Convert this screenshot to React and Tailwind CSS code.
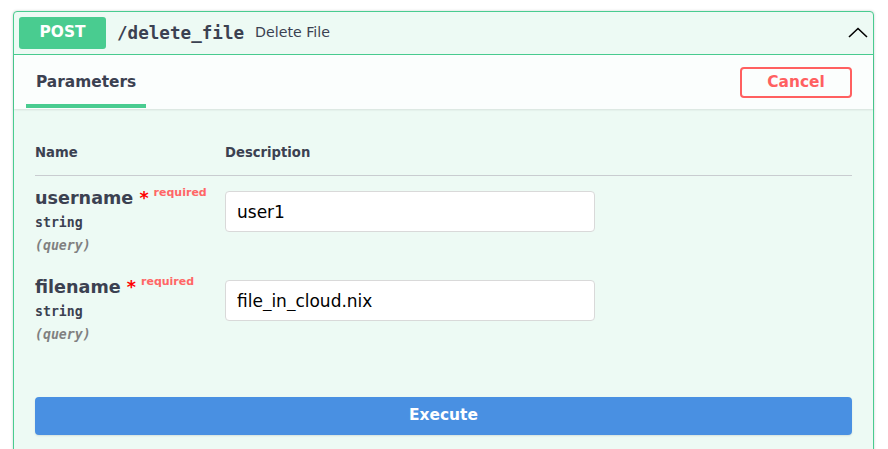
import React from "react";

const sans = { fontFamily: '"DejaVu Sans", sans-serif' };

function ParamRow({ name, value }) {
  return (
    <div className="flex h-[89px]">
      <div className="w-[190px] shrink-0 pt-[7px]">
        <div className="whitespace-nowrap text-[17.6px] font-bold leading-[19px] text-[#3b4151]">
          {name}
          <span className="text-[red]">&nbsp;*</span>
          <span className="px-[5px] align-[8px] text-[11px] font-bold text-[#ff6666]">
            required
          </span>
        </div>
        <div className="mt-[8px] font-['DejaVu_Sans_Mono',monospace] text-[13.2px] font-semibold leading-[14px] text-[#3b4151]">
          string
        </div>
        <div className="mt-[9px] font-['DejaVu_Sans_Mono',monospace] text-[13.2px] font-semibold italic leading-[14px] text-[#808080]">
          (query)
        </div>
      </div>
      <div className="pt-[15px]">
        <input
          defaultValue={value}
          className="h-[41px] w-[370px] rounded-[4px] border border-[#d9d9d9] bg-white px-[11px] text-[17px] text-black outline-none"
          style={sans}
        />
      </div>
    </div>
  );
}

export default function App() {
  return (
    <div className="min-h-screen bg-white pl-[13px] pt-[11px]" style={sans}>
      <div className="w-[861px] rounded-t-[4px] border border-[#49cc90] bg-[#edfaf4] shadow-[0_0_3px_rgba(0,0,0,0.19)]">
        {/* summary */}
        <div className="flex items-center border-b border-[#49cc90] p-[5px]">
          <div className="flex h-[32px] w-[87px] items-center justify-center rounded-[3px] bg-[#49cc90] text-[15.4px] font-bold text-white">
            POST
          </div>
          <span className="px-[11px] font-['DejaVu_Sans_Mono',monospace] text-[17.6px] font-bold text-[#3b4151]">
            /delete_file
          </span>
          <span className="text-[14.2px] text-[#3b4151]">Delete File</span>
          <svg className="ml-auto" width="20" height="20" viewBox="0 0 20 20">
            <polyline
              points="1,14 10,5.5 19,14"
              fill="none"
              stroke="#000"
              strokeWidth="1.6"
            />
          </svg>
        </div>

        {/* section header */}
        <div className="flex h-[54px] items-start bg-white/80 pl-[12px] pr-[21px] shadow-[0_1px_2px_rgba(0,0,0,0.1)]">
          <div className="mt-[18px] border-b-4 border-[#49cc90] px-[10px] pb-[13px] text-[15.4px] font-bold leading-[18px] text-[#3b4151]">
            Parameters
          </div>
          <button className="ml-auto mt-[12px] h-[31px] w-[112px] rounded-[4px] border-2 border-[#ff6060] text-[15.4px] font-bold text-[#ff6060]">
            Cancel
          </button>
        </div>

        {/* body */}
        <div className="px-[21px] pt-[37px] pb-[20px]">
          <div className="flex border-b border-[#c9ccd0] pb-[15px] text-[13.2px] font-bold leading-[14px] text-[#3b4151]">
            <div className="w-[190px]">Name</div>
            <div>Description</div>
          </div>
          <ParamRow name="username" value="user1" />
          <ParamRow name="filename" value="file_in_cloud.nix" />
          <button className="mt-[43px] h-[38px] w-full rounded-[4px] bg-[#4990e2] text-[15.4px] font-bold text-white shadow-[0_1px_2px_rgba(0,0,0,0.1)]">
            Execute
          </button>
        </div>
      </div>
    </div>
  );
}
